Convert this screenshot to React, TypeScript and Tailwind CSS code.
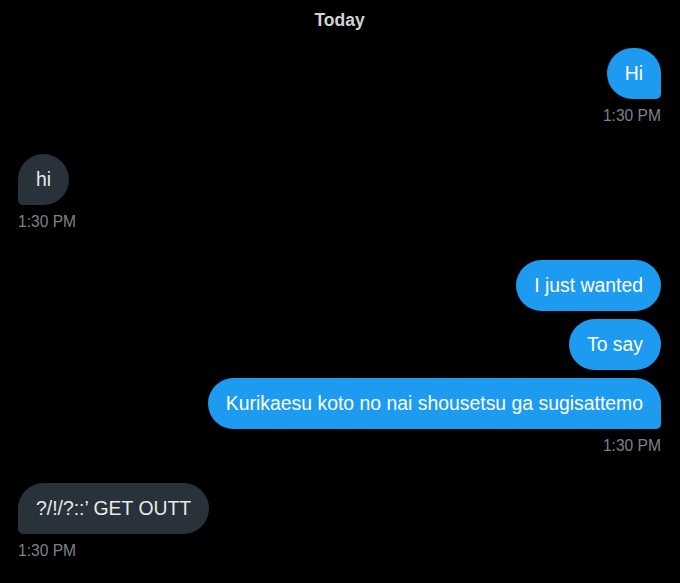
const font = { fontFamily: '"Liberation Sans", Arial, sans-serif' };

type Msg = { text: string; last?: boolean };

const Sent = ({ text, last }: Msg) => (
  <div
    className={`self-end bg-[#1d9bf0] text-white text-[19.4px] leading-[27px] px-[18px] py-[12px] rounded-[26px] ${
      last ? "rounded-br-[5px]" : ""
    }`}
  >
    {text}
  </div>
);

const Received = ({ text }: Msg) => (
  <div className="self-start bg-[#29323b] text-[#e7e9ea] text-[19.4px] leading-[27px] px-[18px] py-[12px] rounded-[26px] rounded-bl-[5px]">
    {text}
  </div>
);

const Time = ({ right }: { right?: boolean }) => (
  <div
    className={`mt-[7px] text-[15.6px] leading-[20px] text-[#7b8288] ${
      right ? "self-end" : "self-start"
    }`}
  >
    1:30 PM
  </div>
);

export default function App() {
  return (
    <div style={font} className="w-[680px] h-[583px] bg-black overflow-hidden">
      <div className="flex flex-col pl-[18px] pr-[19px] pt-[10px]">
        <div className="self-center text-[17.5px] leading-[20px] font-bold text-[#cfd2d4]">
          Today
        </div>

        <div className="flex flex-col mt-[18px]">
          <Sent text="Hi" last />
          <Time right />
        </div>

        <div className="flex flex-col mt-[28px]">
          <Received text="hi" />
          <Time />
        </div>

        <div className="flex flex-col gap-[8px] mt-[28px]">
          <Sent text="I just wanted" />
          <Sent text="To say" />
          <Sent text="Kurikaesu koto no nai shousetsu ga sugisattemo" last />
        </div>
        <Time right />

        <div className="flex flex-col mt-[27px]">
          <Received text="?/!/?::’ GET OUTT" />
          <Time />
        </div>
      </div>
    </div>
  );
}
